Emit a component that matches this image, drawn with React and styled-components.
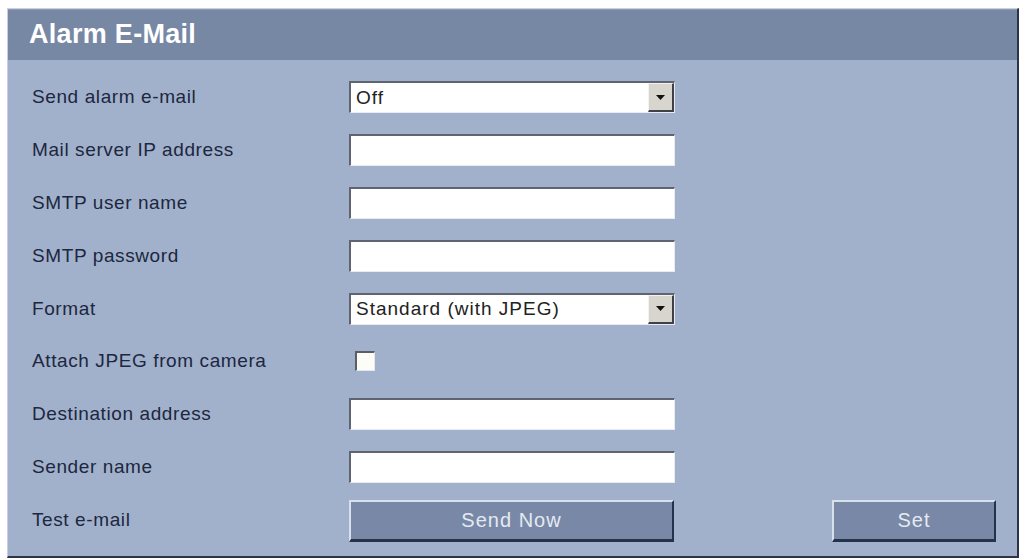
import React, { useState } from 'react';
import styled, { createGlobalStyle } from 'styled-components';

const GlobalStyle = createGlobalStyle`
  html, body {
    margin: 0;
    padding: 0;
    background: #ffffff;
  }
  body {
    font-family: "Liberation Sans", Arial, sans-serif;
  }
`;

const Page = styled.div`
  padding: 8px 6px 2px 7px;
`;

const Panel = styled.section`
  width: 1009px;
  height: 547px;
  background: #a2b1cb;
  border-top: 1px solid #c9d0dc;
  border-left: 1px solid #c9d0dc;
  border-right: 2px solid #2c3547;
  border-bottom: 2px solid #2c3547;
  display: flex;
  flex-direction: column;
`;

const Header = styled.h1`
  margin: 0;
  height: 51px;
  box-sizing: border-box;
  padding: 0 0 2px 21px;
  background: #7788a5;
  border-top: 1px solid #8e9db7;
  display: flex;
  align-items: center;
  color: #ffffff;
  font-size: 27px;
  font-weight: bold;
  letter-spacing: 0.3px;
`;

const Body = styled.div`
  padding: 11px 21px 0 24px;
  display: flex;
  flex-direction: column;
`;

const Row = styled.div`
  height: 52.8px;
  display: grid;
  grid-template-columns: 317px 326px 1fr;
  align-items: center;
`;

const Label = styled.span`
  color: #1c2740;
  font-size: 19px;
  letter-spacing: 0.6px;
`;

const Field = styled.div`
  height: 32px;
  box-sizing: border-box;
  background: #ffffff;
  border-top: 2px solid #5f6470;
  border-left: 2px solid #5f6470;
  border-right: 1px solid #e8ecf2;
  border-bottom: 1px solid #e8ecf2;
  display: flex;
  align-items: stretch;
  color: #222222;
  font-size: 19px;
  letter-spacing: 1px;
  padding-left: 5px;
`;

const SelectValue = styled.span`
  flex: 1;
  display: flex;
  align-items: center;
`;

const DropButton = styled.span`
  width: 26px;
  box-sizing: border-box;
  background: #d8d5ce;
  border-top: 1px solid #f4f3ef;
  border-left: 1px solid #f4f3ef;
  border-right: 2px solid #3f4147;
  border-bottom: 2px solid #3f4147;
  display: flex;
  align-items: center;
  justify-content: center;
`;

const Check = styled.span`
  width: 20px;
  height: 20px;
  margin-left: 6px;
  box-sizing: border-box;
  background: #fbfdf6;
  border-top: 2px solid #5a5e66;
  border-left: 2px solid #5a5e66;
  border-right: 1px solid #e3e7ee;
  border-bottom: 1px solid #e3e7ee;
`;

const Button = styled.button`
  height: 42px;
  width: ${(p) => p.$width}px;
  justify-self: ${(p) => p.$align || 'start'};
  box-sizing: border-box;
  background: #7888a6;
  border-top: 2px solid #d8e0ec;
  border-left: 2px solid #d8e0ec;
  border-right: 2px solid #26324a;
  border-bottom: 3px solid #26324a;
  color: #e4eaf2;
  font-family: "Liberation Sans", Arial, sans-serif;
  font-size: 20px;
  letter-spacing: 1px;
  padding: 0;
  margin-top: 3px;
`;

const Arrow = () => (
  <svg width="9" height="5" viewBox="0 0 9 5">
    <path d="M0 0h9L4.5 5z" fill="#111" />
  </svg>
);

const Select = ({ value }) => (
  <Field>
    <SelectValue>{value}</SelectValue>
    <DropButton>
      <Arrow />
    </DropButton>
  </Field>
);

const TextInput = () => (
  <Field>
    <SelectValue />
  </Field>
);

const fields = [
  { label: 'Send alarm e-mail', type: 'select', value: 'Off' },
  { label: 'Mail server IP address', type: 'text' },
  { label: 'SMTP user name', type: 'text' },
  { label: 'SMTP password', type: 'text' },
  { label: 'Format', type: 'select', value: 'Standard (with JPEG)' },
  { label: 'Attach JPEG from camera', type: 'check' },
  { label: 'Destination address', type: 'text' },
  { label: 'Sender name', type: 'text' },
];

const App = () => {
  const [rows] = useState(fields);

  return (
    <Page>
      <GlobalStyle />
      <Panel>
        <Header>Alarm E-Mail</Header>
        <Body>
          {rows.map((f) => (
            <Row key={f.label}>
              <Label>{f.label}</Label>
              {f.type === 'select' && <Select value={f.value} />}
              {f.type === 'text' && <TextInput />}
              {f.type === 'check' && <Check />}
            </Row>
          ))}
          <Row>
            <Label>Test e-mail</Label>
            <Button $width={325}>Send Now</Button>
            <Button $width={164} $align="end">Set</Button>
          </Row>
        </Body>
      </Panel>
    </Page>
  );
};

export default App;
